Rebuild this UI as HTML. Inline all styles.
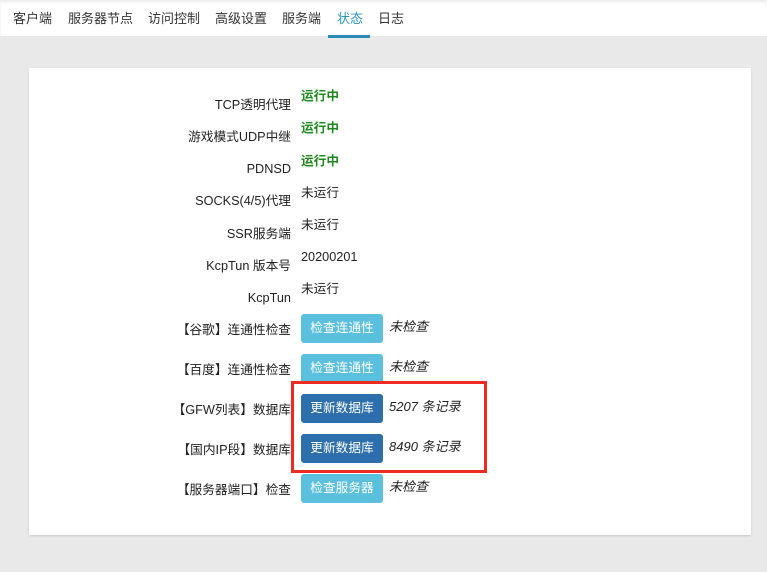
<!DOCTYPE html>
<html><head><meta charset="utf-8"><style>
*{margin:0;padding:0;box-sizing:border-box}
body{width:767px;height:572px;background:#e9e9e9;font-family:"Liberation Sans","Noto Sans CJK SC",sans-serif;font-size:13px;color:#222;position:relative;overflow:hidden}
.nav{position:absolute;left:0;top:0;width:767px;height:36px;background:#fff;box-shadow:inset 0 2px 2px rgba(0,0,0,.08)}
.nav span{position:absolute;top:8px;font-size:13px;color:#333}
.nav .act{color:#2b95c0}
.ul{position:absolute;left:328px;top:35px;width:42px;height:3px;background:#2a8cb5}
.card{position:absolute;left:29px;top:68px;width:722px;height:467px;background:#fff;box-shadow:0 1px 2px rgba(0,0,0,.15)}
.l{position:absolute;right:476px;font-size:12.7px;color:#222;white-space:nowrap;line-height:16px}
.v{position:absolute;left:301px;font-size:12.7px;line-height:16px;white-space:nowrap}
.g{color:#1e8a1e;font-weight:bold}
.i{font-style:italic;font-size:13px}
.b{position:absolute;left:301px;width:82px;height:29px;border-radius:3px;color:#fff;font-size:12.7px;text-align:center;line-height:29px}
.lb{background:#5bc0de}
.db{background:#2d6fad}
.red{position:absolute;left:291px;top:381px;width:196px;height:92px;border:3px solid #ee2b22}
</style></head><body>
<div class="nav">
<span style="left:13px">客户端</span><span style="left:68px">服务器节点</span><span style="left:148px">访问控制</span><span style="left:215px">高级设置</span><span style="left:282px">服务端</span><span class="act" style="left:337px">状态</span><span style="left:378px">日志</span>
</div>
<div class="ul"></div>
<div class="card"></div>
<div class="l" style="top:97px">TCP透明代理</div><div class="v g" style="top:88px">运行中</div>
<div class="l" style="top:129px">游戏模式UDP中继</div><div class="v g" style="top:120px">运行中</div>
<div class="l" style="top:161px">PDNSD</div><div class="v g" style="top:153px">运行中</div>
<div class="l" style="top:193px">SOCKS(4/5)代理</div><div class="v" style="top:185px">未运行</div>
<div class="l" style="top:226px">SSR服务端</div><div class="v" style="top:217px">未运行</div>
<div class="l" style="top:258px">KcpTun 版本号</div><div class="v" style="top:249px">20200201</div>
<div class="l" style="top:290px">KcpTun</div><div class="v" style="top:281px">未运行</div>
<div class="l" style="top:322px">【谷歌】连通性检查</div><div class="b lb" style="top:314px">检查连通性</div><div class="v i" style="left:389px;top:319px">未检查</div>
<div class="l" style="top:362px">【百度】连通性检查</div><div class="b lb" style="top:354px">检查连通性</div><div class="v i" style="left:389px;top:359px">未检查</div>
<div class="l" style="top:402px">【GFW列表】数据库</div><div class="b db" style="top:394px">更新数据库</div><div class="v i" style="left:389px;top:399px">5207 条记录</div>
<div class="l" style="top:442px">【国内IP段】数据库</div><div class="b db" style="top:434px">更新数据库</div><div class="v i" style="left:389px;top:439px">8490 条记录</div>
<div class="l" style="top:482px">【服务器端口】检查</div><div class="b lb" style="top:474px">检查服务器</div><div class="v i" style="left:389px;top:479px">未检查</div>
<div class="red"></div>
</body></html>
